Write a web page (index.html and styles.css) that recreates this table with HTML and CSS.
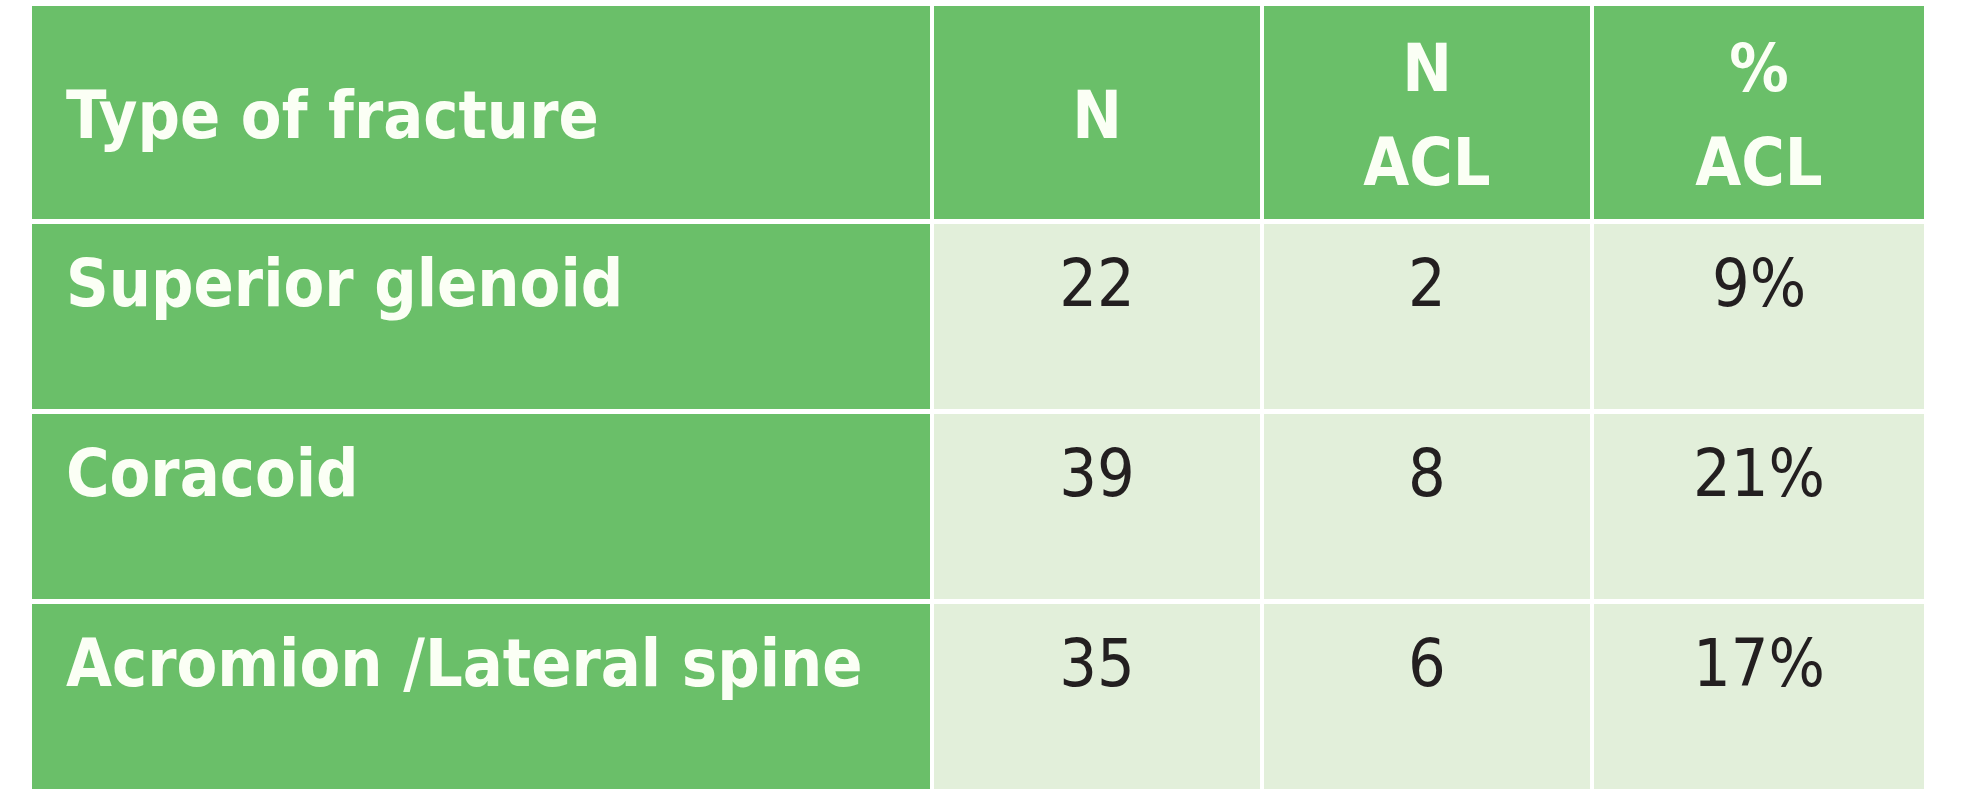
FILE: index.html
```html
<!DOCTYPE html>
<html>
<head>
<meta charset="utf-8">
<link rel="stylesheet" href="styles.css">
</head>
<body>
<div class="table">
  <div class="cell head label">Type of fracture</div>
  <div class="cell head num">N</div>
  <div class="cell head num">N<br>ACL</div>
  <div class="cell head num">%<br>ACL</div>

  <div class="cell rowhead">Superior glenoid</div>
  <div class="cell data">22</div>
  <div class="cell data">2</div>
  <div class="cell data">9%</div>

  <div class="cell rowhead">Coracoid</div>
  <div class="cell data">39</div>
  <div class="cell data">8</div>
  <div class="cell data">21%</div>

  <div class="cell rowhead">Acromion /Lateral spine</div>
  <div class="cell data">35</div>
  <div class="cell data">6</div>
  <div class="cell data">17%</div>
</div>
</body>
</html>
```

FILE: styles.css
```css
html, body {
  margin: 0;
  padding: 0;
  background: #ffffff;
}

body {
  padding: 6px 0 0 32px;
  font-family: "DejaVu Sans Condensed", "DejaVu Sans", sans-serif;
}

.table {
  display: grid;
  grid-template-columns: 898px 326px 326px 330px;
  grid-template-rows: 213px 185px 185px 185px;
  column-gap: 4px;
  row-gap: 5px;
  width: max-content;
}

.cell {
  box-sizing: border-box;
  font-size: 66px;
  line-height: 94px;
}

.head {
  background: #6abf69;
  color: #fbfff5;
  font-weight: bold;
  display: flex;
  align-items: center;
}

.head.label {
  padding-left: 34px;
  padding-top: 6px;
}

.head.num {
  justify-content: center;
  text-align: center;
  padding-top: 6px;
}

.rowhead {
  background: #6abf69;
  color: #fbfff5;
  font-weight: bold;
  padding: 13px 0 0 34px;
}

.data {
  background: #e2efda;
  color: #231f20;
  text-align: center;
  padding-top: 13px;
}
```
